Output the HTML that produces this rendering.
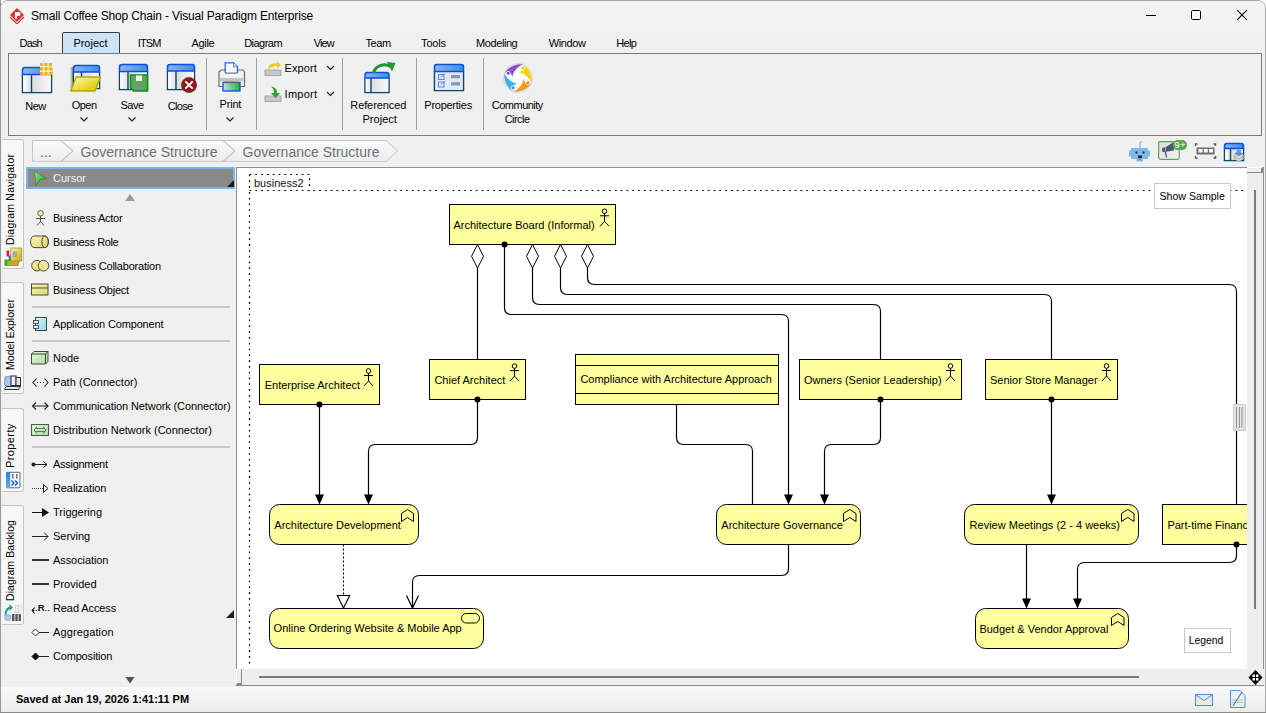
<!DOCTYPE html>
<html><head><meta charset="utf-8">
<style>
*{margin:0;padding:0;box-sizing:border-box}
html,body{width:1266px;height:713px;overflow:hidden;background:#fff}
body{font-family:"Liberation Sans",sans-serif;font-size:12px;color:#000;position:relative}
.a{position:absolute}
#win{position:absolute;left:0;top:0;width:1266px;height:713px;background:#f0f0f0;border:1px solid #a8a8a8;border-radius:8px 8px 0 0;overflow:hidden}
#title{position:absolute;left:0;top:0;width:1266px;height:30px;background:#f3f3f3}
.menu{position:absolute;top:37px;font-size:11px;color:#000}
#ribbon{position:absolute;left:8px;top:53px;width:1254px;height:83px;border:1px solid #7a7a7a;background:#f0f0f0}
.rl{position:absolute;font-size:11px;white-space:nowrap;color:#000}
.sep{position:absolute;top:58px;width:1px;height:72px;background:#a0a0a0}
.pal{position:absolute;left:53px;font-size:11px;letter-spacing:-0.1px;color:#000}
.palsep{position:absolute;left:32px;width:198px;height:2px;background:#c8c8c8}
.node{position:absolute;background:#ffff9f;border:1px solid #000;font-size:11px;color:#000;white-space:nowrap}
</style></head><body>
<div id="win">
 <div id="title"></div>
</div>
<!-- title -->
<svg class="a" style="left:9px;top:7px" width="16" height="17" viewBox="0 0 16 17">
 <path d="M8 1 L15 8 L8 15 L1 8 Z" fill="#d8353a"/>
 <path d="M1 10 L8 17 L15 10" fill="none" stroke="#d8353a" stroke-width="1.2"/>
 <path d="M6 5 h3.5 a2 2 0 0 1 0 4 h-1.5 v2.5 h-2 z" fill="#fff"/>
</svg>
<div class="a" id="ttl" style="left:31px;top:9px;font-size:12px;letter-spacing:-0.16px;color:#000">Small Coffee Shop Chain - Visual Paradigm Enterprise</div>
<!-- window controls -->
<div class="a" style="left:1146px;top:15px;width:10px;height:1px;background:#000"></div>
<div class="a" style="left:1190.5px;top:10px;width:10px;height:10px;border:1px solid #000;border-radius:1.5px"></div>
<svg class="a" style="left:1236px;top:9px" width="13" height="13"><path d="M1.2 1.2L10.8 10.8M10.8 1.2L1.2 10.8" stroke="#000" stroke-width="1.1"/></svg>

<!-- menu tabs -->
<div class="a" style="left:62px;top:32px;width:58px;height:22px;background:#cce4f7;border:1px solid #3c3c3c;border-bottom:none;border-radius:2px 2px 0 0"></div>
<div class="menu" style="left:19.6px;letter-spacing:-0.867px">Dash</div>
<div class="menu" style="left:73.4px;letter-spacing:-0.017px">Project</div>
<div class="menu" style="left:137.7px;letter-spacing:-0.833px">ITSM</div>
<div class="menu" style="left:191.6px;letter-spacing:-0.35px">Agile</div>
<div class="menu" style="left:244.2px;letter-spacing:-0.533px">Diagram</div>
<div class="menu" style="left:313.8px;letter-spacing:-0.9px">View</div>
<div class="menu" style="left:365.5px;letter-spacing:-0.433px">Team</div>
<div class="menu" style="left:421.1px;letter-spacing:-0.2px">Tools</div>
<div class="menu" style="left:476.1px;letter-spacing:-0.429px">Modeling</div>
<div class="menu" style="left:548.7px;letter-spacing:-0.36px">Window</div>
<div class="menu" style="left:616.3px;letter-spacing:-0.667px">Help</div>

<div id="ribbon"></div>

<!-- ribbon icons -->
<svg class="a" style="left:0;top:0" width="1266" height="140">
 <defs>
  <linearGradient id="hdr" x1="0" y1="0" x2="1" y2="0"><stop offset="0" stop-color="#8db5e8"/><stop offset="1" stop-color="#3d8ee6"/></linearGradient>
  <linearGradient id="pane" x1="0" y1="0" x2="1" y2="0"><stop offset="0" stop-color="#fafafa"/><stop offset="1" stop-color="#d8d8d8"/></linearGradient>
  <linearGradient id="fold" x1="0" y1="0" x2="1" y2="1"><stop offset="0" stop-color="#f4ee9a"/><stop offset="1" stop-color="#c9b81c"/></linearGradient>
  <linearGradient id="grn" x1="0" y1="0" x2="1" y2="0"><stop offset="0" stop-color="#7ac77a"/><stop offset="1" stop-color="#2ea03a"/></linearGradient>
 </defs>
 <!-- New -->
 <linearGradient id="lp" x1="0" y1="0" x2="1" y2="0"><stop offset="0" stop-color="#ffffff"/><stop offset="1" stop-color="#dedede"/></linearGradient>
 <linearGradient id="rp" x1="0" y1="0" x2="1" y2="0"><stop offset="0" stop-color="#dcdcdc"/><stop offset="1" stop-color="#fafafa"/></linearGradient>

 <path d="M22.5 74.5 V92.5 H51.5 V74.5" fill="none" stroke="#0d4866" stroke-width="1.5"/>
 <rect x="23.2" y="74.5" width="8.3" height="17.3" fill="url(#lp)"/>
 <rect x="31.5" y="74.5" width="19.3" height="17.3" fill="url(#rp)"/>
 <line x1="31.5" y1="74.5" x2="31.5" y2="92.5" stroke="#0d4866" stroke-width="1.4"/>
 <path d="M22.5 74.5 V70.0 Q22.5 67.5 25.0 67.5 H49.0 Q51.5 67.5 51.5 70.0 V74.5 Z" fill="url(#hdr)" stroke="#0a50e0" stroke-width="1.5"/>

 <rect x="40" y="63" width="12" height="12" fill="#eab020"/>
 <path d="M43.6 63v12M48.2 63v12M40 66.5h12M40 71.2h12" stroke="#fff8c8" stroke-width="1.2"/>
 <!-- Open -->
 <linearGradient id="shd" x1="0" y1="0" x2="1" y2="0"><stop offset="0" stop-color="#f0f0f0"/><stop offset="1" stop-color="#909090"/></linearGradient>
 <rect x="69.5" y="67" width="3.5" height="24" fill="url(#shd)"/>

 <path d="M73.5 72.0 V88.5 H99.5 V72.0" fill="none" stroke="#0d4866" stroke-width="1.5"/>
 <rect x="74.2" y="72.0" width="7.3" height="15.8" fill="url(#lp)"/>
 <rect x="81.5" y="72.0" width="17.3" height="15.8" fill="url(#rp)"/>
 <line x1="81.5" y1="72.0" x2="81.5" y2="88.5" stroke="#0d4866" stroke-width="1.4"/>
 <path d="M73.5 72.0 V68.0 Q73.5 65.5 76.0 65.5 H97.0 Q99.5 65.5 99.5 68.0 V72.0 Z" fill="url(#hdr)" stroke="#0a50e0" stroke-width="1.5"/>

 <linearGradient id="fold2" x1="0" y1="0" x2="1" y2="1"><stop offset="0" stop-color="#fffbd0"/><stop offset="0.6" stop-color="#e8d830"/><stop offset="1" stop-color="#d8c400"/></linearGradient>
 <path d="M76.2 77 L100.5 77 L95 91 L70.8 91 Z" fill="url(#fold2)" stroke="#b8a800" stroke-width="1.4" stroke-linejoin="round"/>
 <!-- Save -->

 <path d="M119.5 71.5 V89.5 H147.5 V71.5" fill="none" stroke="#0d4866" stroke-width="1.5"/>
 <rect x="120.2" y="71.5" width="7.8" height="17.3" fill="url(#lp)"/>
 <rect x="128" y="71.5" width="18.8" height="17.3" fill="url(#rp)"/>
 <line x1="128" y1="71.5" x2="128" y2="89.5" stroke="#0d4866" stroke-width="1.4"/>
 <path d="M119.5 71.5 V67.0 Q119.5 64.5 122.0 64.5 H145.0 Q147.5 64.5 147.5 67.0 V71.5 Z" fill="url(#hdr)" stroke="#0a50e0" stroke-width="1.5"/>

 <path d="M130.5 75 h17 v16 h-14 l-3 -3 z" fill="#58a858" stroke="#10900f" stroke-width="1.4"/>
 <rect x="136" y="75.5" width="6" height="5.5" fill="#fff"/>
 <rect x="134.5" y="86.3" width="7" height="2.6" fill="#7a8ab8"/>
 <!-- Close -->

 <path d="M167.5 71.0 V89.5 H194.5 V71.0" fill="none" stroke="#0d4866" stroke-width="1.5"/>
 <rect x="168.2" y="71.0" width="7.8" height="17.8" fill="url(#lp)"/>
 <rect x="176" y="71.0" width="17.8" height="17.8" fill="url(#rp)"/>
 <line x1="176" y1="71.0" x2="176" y2="89.5" stroke="#0d4866" stroke-width="1.4"/>
 <path d="M167.5 71.0 V67.0 Q167.5 64.5 170.0 64.5 H192.0 Q194.5 64.5 194.5 67.0 V71.0 Z" fill="url(#hdr)" stroke="#0a50e0" stroke-width="1.5"/>

 <circle cx="189" cy="85" r="7.6" fill="#8c1c1c" stroke="#6a1010" stroke-width="0.6"/>
 <path d="M185.3 81.3 L192.7 88.7 M192.7 81.3 L185.3 88.7" stroke="#fff" stroke-width="1.9"/>
 <!-- Print -->
 <linearGradient id="pg2" x1="0" y1="0" x2="1" y2="0"><stop offset="0" stop-color="#c8dcf4"/><stop offset="1" stop-color="#18b828"/></linearGradient>
 <path d="M219 72 L221 70 H243 L244.5 72 V86.5 H219 Z" fill="#f2f2f2" stroke="#6a6a6a" stroke-width="1.2"/>
 <path d="M225.2 73 V62.8 H233.5 L237.5 66.8 V73" fill="#f8f8f8" stroke="#1a6ae8" stroke-width="1.3"/>
 <path d="M233.5 62.8 V66.8 H237.5" fill="#e0e8f8" stroke="#1a6ae8" stroke-width="0.8"/>
 <rect x="225" y="72.5" width="12.5" height="1.2" fill="#777"/>
 <rect x="220" y="78" width="23" height="3.3" fill="#c4c4c4"/>
 <rect x="223" y="82.5" width="17" height="8.5" fill="url(#pg2)" stroke="#1050e0" stroke-width="1.3"/>
 <rect x="224.5" y="81.5" width="14.5" height="1.6" fill="#6a6a6a"/>
 <path d="M219 86.5 H222.3 M240.7 86.5 H244.5" stroke="#6a6a6a" stroke-width="1.2"/>
 <!-- Export -->
 <rect x="265" y="70" width="16" height="5.5" fill="#c8c8c8" stroke="#9a9a9a" stroke-width="0.8"/>
 <path d="M268 70 C268 64 272 63 277 63.5 L277 61 L281 65 L277 68.5 L277 66 C273 66 270 67 268 70 Z" fill="#e8c82a"/>
 <!-- Import -->
 <rect x="265" y="96" width="16" height="5.5" fill="#c8c8c8" stroke="#9a9a9a" stroke-width="0.8"/>
 <path d="M271 86.5 C275 87 277 89 277 93 L280 93 L275.5 98 L271 93 L274 93 C274 90 273 88 271 86.5 Z" fill="#2aa82a"/>
 <!-- Referenced project -->

 <path d="M365 78.0 V92.5 H389 V78.0" fill="none" stroke="#0d4866" stroke-width="1.5"/>
 <rect x="365.7" y="78.0" width="5.3" height="13.8" fill="url(#lp)"/>
 <rect x="371" y="78.0" width="17.3" height="13.8" fill="url(#rp)"/>
 <line x1="371" y1="78.0" x2="371" y2="92.5" stroke="#0d4866" stroke-width="1.4"/>
 <path d="M365 78.0 V75.0 Q365 72.5 367.5 72.5 H386.5 Q389 72.5 389 75.0 V78.0 Z" fill="url(#hdr)" stroke="#0a50e0" stroke-width="1.5"/>

 <path d="M373.5 73 C375 66 384 62.5 390.5 66.5" fill="none" stroke="#22962a" stroke-width="3"/>
 <path d="M387 62 L395.5 63 L392 71.5 Z" fill="#22962a"/>
 <!-- Properties -->
 <path d="M434.5 71.5 V90.5 H463.5 V71.5" fill="#e2e8f2" stroke="#0d4866" stroke-width="1.5"/>
 <rect x="435.5" y="72" width="27" height="18" fill="#e4eaf4"/>
 <path d="M434.5 71.5 V66.5 Q434.5 64.5 436.5 64.5 H461.5 Q463.5 64.5 463.5 66.5 V71.5 Z" fill="url(#hdr)" stroke="#0a50e0" stroke-width="1.5"/>
 <rect x="438.5" y="74.5" width="5.5" height="5" fill="#dde6f8" stroke="#5a88e0" stroke-width="1"/>
 <rect x="438.5" y="82" width="5.5" height="5" fill="#dde6f8" stroke="#5a88e0" stroke-width="1"/>
 <path d="M441 77 L445.5 73.5 M441 84.5 L445.5 81" stroke="#5a98e8" stroke-width="1"/>
 <rect x="451" y="75" width="9" height="3.3" fill="#8a98ae"/>
 <rect x="451" y="82.2" width="9" height="3.3" fill="#8a98ae"/>
 <!-- Community circle -->
 <defs>
  <radialGradient id="ccbg" cx="0.5" cy="0.5" r="0.5"><stop offset="0.5" stop-color="#ffffff"/><stop offset="1" stop-color="#dcdcdc"/></radialGradient>
 </defs>
 <g transform="translate(500,60)">
  <circle cx="18" cy="18" r="15" fill="url(#ccbg)"/>
  <path d="M22.5 4.2 C15 4 8.5 7 5.2 12.5 L8.5 11.5 C10.5 13 12 15 12.3 17 C13.5 11.5 17 7 22.5 4.2 Z" fill="#8a50d0"/>
  <circle cx="8.2" cy="13.2" r="1.9" fill="#7a40c8" stroke="#fff" stroke-width="0.8"/>
  <g transform="rotate(90 18 18)"><path d="M22.5 4.2 C15 4 8.5 7 5.2 12.5 L8.5 11.5 C10.5 13 12 15 12.3 17 C13.5 11.5 17 7 22.5 4.2 Z" fill="#f6d200"/><circle cx="8.2" cy="13.2" r="1.9" fill="#f0c800" stroke="#fff" stroke-width="0.8"/></g>
  <g transform="rotate(180 18 18)"><path d="M22.5 4.2 C15 4 8.5 7 5.2 12.5 L8.5 11.5 C10.5 13 12 15 12.3 17 C13.5 11.5 17 7 22.5 4.2 Z" fill="#ee9a22"/><circle cx="8.2" cy="13.2" r="1.9" fill="#e88010" stroke="#fff" stroke-width="0.8"/></g>
  <g transform="rotate(270 18 18)"><path d="M22.5 4.2 C15 4 8.5 7 5.2 12.5 L8.5 11.5 C10.5 13 12 15 12.3 17 C13.5 11.5 17 7 22.5 4.2 Z" fill="#40b0ea"/><circle cx="8.2" cy="13.2" r="1.9" fill="#2098e0" stroke="#fff" stroke-width="0.8"/></g>
 </g>
</svg>
<div class="rl" style="left:25.2px;top:100px;letter-spacing:-0.5px">New</div>
<div class="rl" style="left:71.7px;top:99px;letter-spacing:-0.5px">Open</div>
<div class="rl" style="left:120.5px;top:99px;letter-spacing:-0.467px">Save</div>
<div class="rl" style="left:167.8px;top:100px;letter-spacing:-0.675px">Close</div>
<div class="rl" style="left:219.5px;top:98px;letter-spacing:-0.175px">Print</div>
<div class="rl" style="left:284.6px;top:62px;letter-spacing:0.06px">Export</div>
<div class="rl" style="left:284.6px;top:88px;letter-spacing:0.26px">Import</div>
<div class="rl" style="left:350.3px;top:99px;letter-spacing:-0.1px">Referenced</div>
<div class="rl" style="left:362.4px;top:113px;letter-spacing:0.05px">Project</div>
<div class="rl" style="left:424.3px;top:99px;letter-spacing:-0.256px">Properties</div>
<div class="rl" style="left:491.8px;top:99px;letter-spacing:-0.512px">Community</div>
<div class="rl" style="left:504.7px;top:113px;letter-spacing:-0.56px">Circle</div>
<svg class="a" style="left:0;top:0" width="400" height="130">
 <path d="M80.5 117.5 l3.5 3.5 l3.5 -3.5 M128.5 117.5 l3.5 3.5 l3.5 -3.5 M226.5 117.5 l3.5 3.5 l3.5 -3.5 M327 66 l3.5 3.5 l3.5 -3.5 M327 92 l3.5 3.5 l3.5 -3.5" fill="none" stroke="#222" stroke-width="1.2"/>
</svg>
<div class="sep" style="left:206px"></div>
<div class="sep" style="left:256px"></div>
<div class="sep" style="left:342px"></div>
<div class="sep" style="left:416px"></div>
<div class="sep" style="left:483px"></div>


<!-- breadcrumb -->
<svg class="a" style="left:0;top:136px" width="420" height="32">
 <defs><linearGradient id="bc" x1="0" y1="0" x2="0" y2="1"><stop offset="0" stop-color="#fbfbfb"/><stop offset="1" stop-color="#ececec"/></linearGradient></defs>
 <path d="M32.5 4.5 H386 L397.5 15 L386 25.5 H32.5 Z" fill="url(#bc)" stroke="#c4c8cc" stroke-width="1"/>
 <path d="M61 4.5 L73 15 L61 25.5" fill="none" stroke="#c4c8cc" stroke-width="1.2"/>
 <path d="M223 4.5 L235 15 L223 25.5" fill="none" stroke="#c4c8cc" stroke-width="1.2"/>
</svg>
<div class="a" style="left:40px;top:144px;font-size:14px;color:#5a5f66">...</div>
<div class="a" style="left:80.5px;top:144px;font-size:14px;color:#6b7078">Governance Structure</div>
<div class="a" style="left:242.5px;top:144px;font-size:14px;color:#6b7078">Governance Structure</div>

<!-- right toolbar icons -->
<svg class="a" style="left:1120px;top:136px" width="146" height="32">
 <g fill="#82b8e8">
  <rect x="11" y="12" width="17" height="11" rx="1"/>
  <rect x="9" y="14.5" width="2.5" height="6"/>
  <rect x="27.5" y="14.5" width="2.5" height="6"/>
  <rect x="16.5" y="22" width="6.5" height="3.5"/>
  <path d="M20 12 V7 L21.5 5.5" fill="none" stroke="#82b8e8" stroke-width="1.3"/>
 </g>
 <rect x="15.5" y="15.5" width="2" height="2" fill="#1a2a3a"/>
 <rect x="22.5" y="15.5" width="2" height="2" fill="#1a2a3a"/>
 <rect x="18" y="19.5" width="4" height="2.5" fill="#1a2a3a"/>
 <rect x="19" y="22" width="2" height="2" fill="#5a9ad8"/>
 <linearGradient id="mg" x1="0" y1="0" x2="1" y2="1"><stop offset="0" stop-color="#dcdcdc"/><stop offset="1" stop-color="#f4f4f4"/></linearGradient>
 <rect x="38.6" y="5.6" width="20.6" height="17.8" rx="1.8" fill="url(#mg)" stroke="#5aa55a" stroke-width="1.2"/>
 <path d="M42.5 11.8 C41.8 12.5 41.8 15 42.8 16 L45.5 15.8 L45 11.5 Z" fill="#4a5872"/>
 <path d="M45.5 11.3 L50.5 8 L53.5 6 L54 13.5 L53.5 14.5 L46 15.8 Z" fill="#4a5872"/>
 <path d="M44.5 15.5 L46 21.5 L47.2 21.2 L46 15.5 Z" fill="#4a5872"/>
 <rect x="52.8" y="4.1" width="14.2" height="10" rx="5" fill="#56a850"/>
 <text x="54.6" y="12.3" font-family="Liberation Sans" font-size="9.5" fill="#fff">9+</text>
 <rect x="76.5" y="11.5" width="18" height="7" fill="#6e6e6e"/>
 <rect x="78.5" y="13" width="4" height="3.5" fill="#fff"/><rect x="83.8" y="13" width="4" height="3.5" fill="#fff"/><rect x="89" y="13" width="4" height="3.5" fill="#fff"/>
 <path d="M75.5 10 V8 H77.5 M93.5 8 H95.5 V10 M95.5 20 V22 H93.5 M77.5 22 H75.5 V20" fill="none" stroke="#555" stroke-width="1.4"/>

 <path d="M104.5 12.5 V24.5 H123.5 V12.5" fill="none" stroke="#0d4866" stroke-width="1.5"/>
 <rect x="105.2" y="12.5" width="5.3" height="11.3" fill="url(#lp)"/>
 <rect x="110.5" y="12.5" width="12.3" height="11.3" fill="url(#rp)"/>
 <line x1="110.5" y1="12.5" x2="110.5" y2="24.5" stroke="#0d4866" stroke-width="1.4"/>
 <path d="M104.5 12.5 V10.0 Q104.5 7.5 107.0 7.5 H121.0 Q123.5 7.5 123.5 10.0 V12.5 Z" fill="url(#hdr)" stroke="#0a50e0" stroke-width="1.5"/>
 <path d="M113.5 22.5 L118.8 19.8 L124 22.5 L118.8 25.5 Z" fill="#d8d8d8" stroke="#a0a0a0" stroke-width="0.7"/>
 <path d="M113.5 20 L118.8 17.3 L124 20 L118.8 23 Z" fill="#d8d8d8" stroke="#a0a0a0" stroke-width="0.7"/>
 <path d="M114.5 17.5 L118.8 15.2 L123 17.5 L118.8 20 Z" fill="#4a90e8" stroke="#a0a0a0" stroke-width="0.6"/>
 <path d="M115.5 15 L118.8 13.2 L122 15 L118.8 16.8 Z" fill="#5aa0f0"/>
</svg>

<!-- left vertical tabs -->
<div class="a" style="left:0;top:138px;width:25px;height:548px;background:#f0f0f0"></div>
<div class="a" style="left:2px;top:139px;width:22px;height:130px;background:#f7f7f7;border:1px solid #c5c5c5;border-left:none;border-radius:0 3px 3px 0"></div>
<div class="a" style="left:2px;top:282px;width:22px;height:112px;background:#f7f7f7;border:1px solid #c5c5c5;border-left:none;border-radius:0 3px 3px 0"></div>
<div class="a" style="left:2px;top:408px;width:22px;height:84px;background:#f7f7f7;border:1px solid #c5c5c5;border-left:none;border-radius:0 3px 3px 0"></div>
<div class="a" style="left:2px;top:505px;width:22px;height:120px;background:#f7f7f7;border:1px solid #c5c5c5;border-left:none;border-radius:0 3px 3px 0"></div>
<div class="a" style="left:0;top:0;width:1px;height:713px;background:#9a9a9a"></div>
<div class="vt a" style="left:4px;top:245px;transform-origin:0 0;transform:rotate(-90deg);font-size:10.5px;letter-spacing:0.22px;white-space:nowrap">Diagram Navigator</div>
<div class="vt a" style="left:4px;top:370px;transform-origin:0 0;transform:rotate(-90deg);font-size:10.5px;letter-spacing:0.02px;white-space:nowrap">Model Explorer</div>
<div class="vt a" style="left:4px;top:468px;transform-origin:0 0;transform:rotate(-90deg);font-size:11px;letter-spacing:0.4px;white-space:nowrap">Property</div>
<div class="vt a" style="left:4px;top:601px;transform-origin:0 0;transform:rotate(-90deg);font-size:10.5px;letter-spacing:0.07px;white-space:nowrap">Diagram Backlog</div>
<svg class="a" style="left:0;top:240px" width="26" height="390">
 <defs>
  <linearGradient id="bk" x1="0" y1="0" x2="1" y2="1"><stop offset="0" stop-color="#fff6a0"/><stop offset="1" stop-color="#c8a810"/></linearGradient>
  <linearGradient id="pb" x1="0" y1="0" x2="0" y2="1"><stop offset="0" stop-color="#1a8af0"/><stop offset="1" stop-color="#60b0f0"/></linearGradient>
 </defs>
 <!-- navigator icon (page y 248-265) -->
 <path d="M7.5 20 H19.5 L18 25.5 H5 Z" fill="#c8aa20" stroke="#7a6a30" stroke-width="0.6"/>
 <rect x="4.5" y="19.5" width="2.8" height="6" fill="#10c020"/>
 <rect x="6.6" y="10.5" width="2.6" height="6" fill="#e01050"/>
 <rect x="8.7" y="15.5" width="2.6" height="5.5" fill="#1070e0"/>
 <rect x="10.8" y="8" width="11" height="13" fill="url(#bk)" stroke="#9a8a30" stroke-width="0.7"/>
 <rect x="13.2" y="12" width="3" height="4.6" fill="#9ab0d8" stroke="#6a80b0" stroke-width="0.5"/>
 <!-- model explorer icon (page y 376-390) -->
 <path d="M4.5 145 L5 137 L11 136 V148 Z" fill="#a8c8f0" stroke="#5a6a80" stroke-width="0.6"/>
 <rect x="11" y="136" width="5" height="9.5" fill="#e8eef8" stroke="#2a3038" stroke-width="1"/>
 <rect x="16" y="137.5" width="4.5" height="8" fill="#dde6f2" stroke="#2a3038" stroke-width="1"/>
 <path d="M4.5 149.5 L6 146.5 H20.5 L18.5 149.5 Z" fill="#e8e8e8" stroke="#2a3038" stroke-width="1"/>
 <!-- property icon (page y 472-488) -->
 <rect x="6.5" y="232.3" width="13.5" height="15.5" rx="1" fill="#f4f8ff" stroke="#3a4a60" stroke-width="0.8"/>
 <rect x="6.2" y="232" width="4" height="16" rx="1" fill="url(#pb)"/>
 <rect x="12" y="234" width="1.6" height="4.5" fill="#6a7a90"/><rect x="16" y="234" width="1.6" height="4.5" fill="#6a7a90"/>
 <path d="M11.5 240.5 L14 243 L11.5 245.5 M15 240.5 L17.5 243 L15 245.5" fill="none" stroke="#1050d0" stroke-width="1.3"/>
 <!-- backlog icon (page y 605-621) -->
 <path d="M5.5 376 C5.5 370 8 367.5 11.5 367.5" fill="none" stroke="#20a088" stroke-width="1.8"/>
 <path d="M9.5 364 L13 367.5 L9.5 371 Z" fill="#20a088"/>
 <circle cx="7.8" cy="377.5" r="3.2" fill="#a8c8f0" stroke="#7aa0d8" stroke-width="0.6"/>
 <rect x="12" y="374" width="2.4" height="7" fill="#555"/><rect x="15.3" y="374" width="2.4" height="7" fill="#555"/><rect x="18.6" y="374" width="2.4" height="7" fill="#555"/>
 <rect x="15.2" y="365.2" width="2.5" height="7.5" fill="none" stroke="#ccc" stroke-width="0.6"/><rect x="18.4" y="365.2" width="2.5" height="7.5" fill="none" stroke="#ccc" stroke-width="0.6"/>
</svg>

<!-- palette -->
<div class="a" style="left:25px;top:167px;width:211px;height:519px;background:#f0f0f0"></div>
<div class="a" style="left:26px;top:167px;width:209px;height:22px;background:#8a8a8a;border:2px solid #78b4ee;border-radius:1px"></div>
<svg class="a" style="left:26px;top:167px" width="210" height="22">
 <defs><linearGradient id="cg" x1="0" y1="0" x2="1" y2="1"><stop offset="0" stop-color="#8ee88e"/><stop offset="1" stop-color="#1a9a2a"/></linearGradient></defs>
 <path d="M8.5 4 L20.5 11.5 L14 12.5 L10 19 Z" fill="url(#cg)" stroke="#2a7a2a" stroke-width="0.6"/>
 <path d="M208 13 L208 20 L201 20 Z" fill="#1a1a1a"/>
</svg>
<div class="a" style="left:53px;top:172px;font-size:11px;color:#f4f4f4">Cursor</div>
<svg class="a" style="left:124px;top:192px" width="12" height="10"><path d="M1 9 L6 2 L11 9 Z" fill="#9a9a9a"/></svg>
<svg class="a" style="left:124px;top:676px" width="12" height="10"><path d="M1.5 1 L6 7.5 L10.5 1 Z" fill="#555"/></svg>
<svg class="a" style="left:224px;top:608px" width="12" height="12"><path d="M10 2 L10 10 L2 10 Z" fill="#222"/></svg>
<div class="palsep" style="top:306px"></div>
<div class="palsep" style="top:340px"></div>
<div class="palsep" style="top:446px"></div>
<div class="pal" style="top:212px;letter-spacing:-0.238px">Business Actor</div>
<div class="pal" style="top:236px;letter-spacing:-0.384px">Business Role</div>
<div class="pal" style="top:260px;letter-spacing:-0.215px">Business Collaboration</div>
<div class="pal" style="top:284px;letter-spacing:-0.243px">Business Object</div>
<div class="pal" style="top:318px;letter-spacing:-0.160px">Application Component</div>
<div class="pal" style="top:352px;letter-spacing:-0.033px">Node</div>
<div class="pal" style="top:376px;letter-spacing:0.047px">Path (Connector)</div>
<div class="pal" style="top:400px;letter-spacing:-0.106px">Communication Network (Connector)</div>
<div class="pal" style="top:424px;letter-spacing:-0.023px">Distribution Network (Connector)</div>
<div class="pal" style="top:458px;letter-spacing:-0.278px">Assignment</div>
<div class="pal" style="top:482px;letter-spacing:-0.100px">Realization</div>
<div class="pal" style="top:506px;letter-spacing:-0.012px">Triggering</div>
<div class="pal" style="top:530px;letter-spacing:-0.033px">Serving</div>
<div class="pal" style="top:554px;letter-spacing:-0.080px">Association</div>
<div class="pal" style="top:578px;letter-spacing:0.015px">Provided</div>
<div class="pal" style="top:602px;letter-spacing:-0.1px">Read Access</div>
<div class="pal" style="top:626px;letter-spacing:0.120px">Aggregation</div>
<div class="pal" style="top:650px;letter-spacing:-0.180px">Composition</div>

<svg class="a" style="left:25px;top:200px" width="30" height="470">
 <defs>
  <linearGradient id="yg" x1="0" y1="0" x2="1" y2="1"><stop offset="0" stop-color="#fbf5b0"/><stop offset="1" stop-color="#e0d870"/></linearGradient>
  <linearGradient id="gg" x1="0" y1="0" x2="1" y2="1"><stop offset="0" stop-color="#e8f8e0"/><stop offset="1" stop-color="#a8d8a0"/></linearGradient>
  <linearGradient id="cyg" x1="0" y1="0" x2="1" y2="1"><stop offset="0" stop-color="#dff6fa"/><stop offset="1" stop-color="#90d8e8"/></linearGradient>
 </defs>
 <!-- actor -->
 <circle cx="15.5" cy="13.2" r="2.8" fill="#f4ec90" stroke="#555" stroke-width="0.9"/>
 <path d="M15.5 16 V22 M11 18.5 H20 M12 25.5 L15.5 21.5 L19 25.5" fill="none" stroke="#444" stroke-width="0.9"/>
 <!-- role -->
 <path d="M9 36 H20 A3.5 5.8 0 0 1 20 47.6 H9 A3.5 5.8 0 0 1 9 36 Z" fill="url(#yg)" stroke="#4a4a40" stroke-width="1"/>
 <ellipse cx="20" cy="41.8" rx="3.2" ry="5.8" fill="none" stroke="#4a4a40" stroke-width="1"/>
 <!-- collaboration -->
 <circle cx="12" cy="65.7" r="5.3" fill="url(#yg)" stroke="#4a4a40" stroke-width="1"/>
 <circle cx="18.5" cy="65.7" r="5.3" fill="url(#yg)" fill-opacity="0.85" stroke="#4a4a40" stroke-width="1"/>
 <!-- object -->
 <rect x="6.5" y="84" width="16.5" height="11" fill="url(#yg)" stroke="#4a4a40" stroke-width="1"/>
 <line x1="6.5" y1="88" x2="23" y2="88" stroke="#4a4a40" stroke-width="1"/>
 <!-- app component -->
 <rect x="10.5" y="117.5" width="11" height="13" fill="url(#cyg)" stroke="#3a4a50" stroke-width="1"/>
 <rect x="8.5" y="120.5" width="5" height="3" fill="#e0f4f8" stroke="#3a4a50" stroke-width="0.9"/>
 <rect x="8.5" y="125.5" width="5" height="3" fill="#e0f4f8" stroke="#3a4a50" stroke-width="0.9"/>
 <!-- node -->
 <path d="M6.5 154 L9 151.5 H23 V161.5 L20.5 164 H6.5 Z" fill="url(#gg)" stroke="#3a4a3a" stroke-width="1"/>
 <path d="M6.5 154 H20.5 V164 M20.5 154 L23 151.5" fill="none" stroke="#3a4a3a" stroke-width="1"/>
 <!-- path -->
 <path d="M11.5 178.5 L8 182.5 L11.5 186.5 M19.5 178.5 L23 182.5 L19.5 186.5" fill="none" stroke="#222" stroke-width="1.1"/>
 <path d="M12 182.5 h1.2 M15 182.5 h1.2 M18 182.5 h1.2" stroke="#222" stroke-width="1"/>
 <!-- comm -->
 <path d="M11 202.5 L7.5 206 L11 209.5 M19.5 202.5 L23 206 L19.5 209.5 M7.5 206 H23" fill="none" stroke="#222" stroke-width="1.1"/>
 <!-- dist -->
 <rect x="6.5" y="224.5" width="17" height="11" fill="url(#gg)" stroke="#4a5a4a" stroke-width="1"/>
 <path d="M12 226.5 L9 230 L12 233.5 M18 226.5 L21 230 L18 233.5 M10 228.5 H20 M10 231.5 H20" fill="none" stroke="#4a6a4a" stroke-width="0.9"/>
 <!-- assignment -->
 <circle cx="8.5" cy="264.5" r="2" fill="#222"/>
 <path d="M8.5 264.5 H22 M18.5 261.5 L22 264.5 L18.5 267.5" fill="none" stroke="#222" stroke-width="1"/>
 <!-- realization -->
 <path d="M7 288.5 H18" stroke="#444" stroke-width="1" stroke-dasharray="1 1"/>
 <path d="M18.5 284.5 L23 288.5 L18.5 292.5 Z" fill="none" stroke="#222" stroke-width="1"/>
 <!-- triggering -->
 <path d="M7 312.5 H17" stroke="#111" stroke-width="1"/>
 <path d="M17 308 L24 312.5 L17 317 Z" fill="#111"/>
 <!-- serving -->
 <path d="M7 336.5 H23 M19 332.5 L23 336.5 L19 340.5" fill="none" stroke="#222" stroke-width="1"/>
 <!-- association -->
 <path d="M7 360 H24" stroke="#333" stroke-width="2"/>
 <!-- provided -->
 <path d="M7 384 H24" stroke="#333" stroke-width="2"/>
 <!-- read access -->
 <path d="M9.5 407.5 L7.3 410.5 L9.5 413.5" fill="none" stroke="#111" stroke-width="1.2"/>
 <text x="12.7" y="410.8" font-family="Liberation Sans" font-size="9.5" font-weight="bold" fill="#111">R</text>
 <path d="M8 410.5 h1.2 M10.6 410.5 h1.2 M13.4 410.5 h1.2 M20.4 410.5 h1.2 M23.2 410.5 h1.2" stroke="#111" stroke-width="1.2"/>
 <!-- aggregation -->
 <path d="M7 432.5 L10.5 429 L14 432.5 L10.5 436 Z" fill="#fff" stroke="#333" stroke-width="1"/>
 <path d="M14 432.5 H24" stroke="#222" stroke-width="1"/>
 <!-- composition -->
 <path d="M7 456.5 L10.5 453 L14 456.5 L10.5 460 Z" fill="#111" stroke="#111" stroke-width="1"/>
 <path d="M14 456.5 H24" stroke="#222" stroke-width="1"/>
</svg>

<!-- canvas -->
<div class="a" style="left:236px;top:167px;width:1011px;height:502px;background:#fff;border-top:1px solid #8a9099;border-left:1px solid #8a9099"></div>

<!-- diagram -->
<svg class="a" style="left:237px;top:168px" width="1010" height="501" viewBox="237 168 1010 501">
<style>
.nd{fill:#ffff9f;stroke:#000;stroke-width:1}
.tx{font-family:"Liberation Sans",sans-serif;font-size:11px;fill:#000}
.ic{fill:none;stroke:#000;stroke-width:1}
.cn{fill:none;stroke:#000;stroke-width:1.2}
</style>
<path d="M249.5 174.5 H309.5 V190.5 M249.5 174.5 V665 M249.5 190.5 H1247" fill="none" stroke="#000" stroke-width="1.2" stroke-dasharray="1.8 4"/>
<text x="254" y="187" style="font-family:'Liberation Sans';font-size:11px;fill:#111">business2</text>
<path class="cn" d="M477.5 268 L477.5 359.5"/>
<path class="cn" d="M504.5 244.5 L504.5 307.5 Q504.5 314.5 511.5 314.5 L781.5 314.5 Q788.5 314.5 788.5 321.5 L788.5 500"/>
<path class="cn" d="M532.5 268 L532.5 297.5 Q532.5 304.5 539.5 304.5 L873.5 304.5 Q880.5 304.5 880.5 311.5 L880.5 359.5"/>
<path class="cn" d="M560.5 268 L560.5 287.5 Q560.5 294.5 567.5 294.5 L1044.5 294.5 Q1051.5 294.5 1051.5 301.5 L1051.5 359.5"/>
<path class="cn" d="M587.5 268 L587.5 277.5 Q587.5 284.5 594.5 284.5 L1229.5 284.5 Q1236.5 284.5 1236.5 291.5 L1236.5 504.5"/>
<path class="cn" d="M319.5 404.5 L319.5 500"/>
<path class="cn" d="M477.5 399.5 L477.5 437.5 Q477.5 444.5 470.5 444.5 L375.5 444.5 Q368.5 444.5 368.5 451.5 L368.5 500"/>
<path class="cn" d="M676.5 404.5 L676.5 437.5 Q676.5 444.5 683.5 444.5 L745.5 444.5 Q752.5 444.5 752.5 451.5 L752.5 504.5"/>
<path class="cn" d="M880.5 399.5 L880.5 437.5 Q880.5 444.5 873.5 444.5 L831.5 444.5 Q824.5 444.5 824.5 451.5 L824.5 500"/>
<path class="cn" d="M1051.5 399.5 L1051.5 500"/>
<path d="M343.5 544.5 V596" fill="none" stroke="#000" stroke-width="1.1" stroke-dasharray="2 2"/>
<path d="M337.3 595.5 H349.7 L343.5 608 Z" fill="#fff" stroke="#000" stroke-width="1.1"/>
<path class="cn" d="M788.5 544.5 L788.5 568.5 Q788.5 575.5 781.5 575.5 L419.5 575.5 Q412.5 575.5 412.5 582.5 L412.5 608"/>
<path class="cn" d="M406.5 595.5 L412.5 608 L418.5 595.5"/>
<path class="cn" d="M1026.5 544.5 L1026.5 604"/>
<path class="cn" d="M1236.5 544.5 L1236.5 555.5 Q1236.5 562.5 1229.5 562.5 L1084.5 562.5 Q1077.5 562.5 1077.5 569.5 L1077.5 604"/>
<path d="M788.5 504.5 L784.0 494.5 L793.0 494.5 Z" fill="#000"/>
<path d="M319.5 504.5 L315.0 494.5 L324.0 494.5 Z" fill="#000"/>
<path d="M368.5 504.5 L364.0 494.5 L373.0 494.5 Z" fill="#000"/>
<path d="M824.5 504.5 L820.0 494.5 L829.0 494.5 Z" fill="#000"/>
<path d="M1051.5 504.5 L1047.0 494.5 L1056.0 494.5 Z" fill="#000"/>
<path d="M1026.5 608.5 L1022.0 598.5 L1031.0 598.5 Z" fill="#000"/>
<path d="M1077.5 608.5 L1073.0 598.5 L1082.0 598.5 Z" fill="#000"/>
<rect x="449.5" y="204.5" width="166.0" height="40.0" rx="0" class="nd"/>
<text x="453.4" y="229" class="tx">Architecture Board (Informal)</text>
<g class="ic"><circle cx="604.5" cy="211.3" r="2.3"/><path d="M604.5 213.60000000000002 V221.3 M600.0 215.8 H609.0 M600.0 226.3 L604.5 221.3 L609.0 226.3"/></g>
<rect x="259.5" y="364.5" width="120.0" height="40.0" rx="0" class="nd"/>
<text x="264.7" y="388.6" class="tx">Enterprise Architect</text>
<g class="ic"><circle cx="368.5" cy="371" r="2.3"/><path d="M368.5 373.3 V381 M364.0 375.5 H373.0 M364.0 386 L368.5 381 L373.0 386"/></g>
<rect x="429.5" y="359.5" width="96.0" height="40.0" rx="0" class="nd"/>
<text x="434.4" y="383.7" class="tx">Chief Architect</text>
<g class="ic"><circle cx="514.5" cy="366.1" r="2.3"/><path d="M514.5 368.40000000000003 V376.1 M510.0 370.6 H519.0 M510.0 381.1 L514.5 376.1 L519.0 381.1"/></g>
<rect x="575.5" y="354.5" width="203.0" height="50.0" rx="0" class="nd"/>
<path d="M575.5 365.5 H778.5 M575.5 393.5 H778.5" stroke="#000" stroke-width="1"/>
<text x="580.4" y="382.9" class="tx">Compliance with Architecture Approach</text>
<rect x="799.5" y="359.5" width="162.0" height="40.0" rx="0" class="nd"/>
<text x="804" y="384" class="tx">Owners (Senior Leadership)</text>
<g class="ic"><circle cx="950.5" cy="366" r="2.3"/><path d="M950.5 368.3 V376 M946.0 370.5 H955.0 M946.0 381 L950.5 376 L955.0 381"/></g>
<rect x="985.5" y="359.5" width="132.0" height="40.0" rx="0" class="nd"/>
<text x="990" y="384" class="tx">Senior Store Manager</text>
<g class="ic"><circle cx="1106.5" cy="366" r="2.3"/><path d="M1106.5 368.3 V376 M1102.0 370.5 H1111.0 M1102.0 381 L1106.5 376 L1111.0 381"/></g>
<rect x="1162.5" y="504.5" width="127.5" height="40.0" rx="0" class="nd"/>
<text x="1167.4" y="528.7" class="tx">Part-time Finance</text>
<rect x="269.5" y="504.5" width="149.0" height="40.0" rx="10" class="nd"/>
<text x="274.3" y="528.8" class="tx">Architecture Development</text>
<path class="ic" d="M401.5 513.5 L407.5 509.5 L413.5 513.5 L413.5 521.5 L407.5 517.5 L401.5 521.5 Z"/>
<rect x="716.5" y="504.5" width="144.0" height="40.0" rx="10" class="nd"/>
<text x="721.3" y="528.7" class="tx">Architecture Governance</text>
<path class="ic" d="M843.5 513.5 L849.75 509.5 L856 513.5 L856 521.5 L849.75 517.5 L843.5 521.5 Z"/>
<rect x="964.5" y="504.5" width="174.0" height="40.0" rx="10" class="nd"/>
<text x="969.6" y="528.7" class="tx">Review Meetings (2 - 4 weeks)</text>
<path class="ic" d="M1121.5 513.5 L1127.75 509.5 L1134 513.5 L1134 521.5 L1127.75 517.5 L1121.5 521.5 Z"/>
<rect x="269.5" y="608.5" width="214.0" height="40.0" rx="10" class="nd"/>
<text x="273.6" y="632.3" class="tx">Online Ordering Website &amp; Mobile App</text>
<rect x="461.5" y="613.5" width="18" height="9.5" rx="4.75" class="ic"/>
<rect x="975.5" y="608.5" width="153.0" height="40.0" rx="10" class="nd"/>
<text x="979.4" y="632.7" class="tx">Budget &amp; Vendor Approval</text>
<path class="ic" d="M1111.5 617.5 L1117.75 613.5 L1124 617.5 L1124 625.5 L1117.75 621.5 L1111.5 625.5 Z"/>
<circle cx="504.5" cy="244.5" r="3" fill="#000"/>
<circle cx="319.5" cy="404.5" r="3" fill="#000"/>
<circle cx="477.5" cy="399.5" r="3" fill="#000"/>
<circle cx="880.5" cy="399.5" r="3" fill="#000"/>
<circle cx="1051.5" cy="399.5" r="3" fill="#000"/>
<circle cx="1236.5" cy="544.5" r="3" fill="#000"/>
<path d="M477.5 244.5 L483.5 256.25 L477.5 268.0 L471.5 256.25 Z" fill="#fff" stroke="#000" stroke-width="1"/>
<path d="M532.5 244.5 L538.5 256.25 L532.5 268.0 L526.5 256.25 Z" fill="#fff" stroke="#000" stroke-width="1"/>
<path d="M560.5 244.5 L566.5 256.25 L560.5 268.0 L554.5 256.25 Z" fill="#fff" stroke="#000" stroke-width="1"/>
<path d="M587.5 244.5 L593.5 256.25 L587.5 268.0 L581.5 256.25 Z" fill="#fff" stroke="#000" stroke-width="1"/>
<rect x="1233.5" y="404.5" width="12" height="26" fill="#e4e4e4" stroke="#cfcfcf" stroke-width="1"/>
<path d="M1236.5 407 V428 M1239.5 407 V428 M1242 407 V428" stroke="#8a8a8a" stroke-width="0.9"/>
<rect x="1154.5" y="183.5" width="76" height="25" fill="#fff" stroke="#c8c8c8" stroke-width="1"/>
<text x="1159.5" y="200.2" style="font-family:'Liberation Sans';font-size:10.6px;fill:#000">Show Sample</text>
<rect x="1184.5" y="628.5" width="46" height="24" fill="#fff" stroke="#c8c8c8" stroke-width="1"/>
<text x="1188.7" y="643.8" style="font-family:'Liberation Sans';font-size:10.4px;fill:#000">Legend</text>
</svg>
<!-- vertical scrollbar area -->
<div class="a" style="left:1247px;top:167px;width:17px;height:519px;background:#eeeeee"></div>
<div class="a" style="left:1263px;top:167px;width:1px;height:519px;background:#8a9099"></div>
<div class="a" style="left:1247px;top:167px;width:16px;height:6px;border-top:1px solid #fff;border-right:2px solid #8a8a8a;border-bottom:1px solid #8a8a8a"></div>
<div class="a" style="left:1254px;top:190px;width:2px;height:419px;background:#7a7a7a"></div>
<!-- horizontal scrollbar -->
<div class="a" style="left:236px;top:669px;width:1028px;height:17px;background:#eeeeee;border-bottom:1px solid #8a9099"></div>
<div class="a" style="left:236px;top:669px;width:6px;height:16px;border-left:1px solid #fff;border-bottom:2px solid #8a8a8a;border-right:1px solid #8a8a8a"></div>
<div class="a" style="left:259px;top:676px;width:880px;height:2px;background:#7a7a7a"></div>
<svg class="a" style="left:1247px;top:669px" width="17" height="17">
 <path d="M8.5 1 L15.5 8.5 L8.5 16 L1.5 8.5 Z" fill="#000"/>
 <rect x="5.5" y="5.5" width="2.5" height="2.5" fill="#fff"/><rect x="9" y="5.5" width="2.5" height="2.5" fill="#fff"/>
 <rect x="5.5" y="9" width="2.5" height="2.5" fill="#fff"/><rect x="9" y="9" width="2.5" height="2.5" fill="#fff"/>
</svg>
<!-- status bar -->
<div class="a" style="left:1px;top:687px;width:1264px;height:25px;background:linear-gradient(#fafafa,#ececec)"></div>
<div class="a" style="left:16px;top:693px;font-size:11px;font-weight:bold;color:#000">Saved at Jan 19, 2026 1:41:11 PM</div>
<svg class="a" style="left:1190px;top:688px" width="60" height="22">
 <rect x="5.5" y="6.5" width="17" height="11" fill="#e8e8e8" stroke="#4a90e0" stroke-width="1"/>
 <path d="M5.5 6.5 L14 12.5 L22.5 6.5" fill="none" stroke="#4a90e0" stroke-width="1"/>
 <path d="M40.5 2.5 H50 L55 7.5 V19.5 H40.5 Z" fill="#f0f0f0" stroke="#4a90e0" stroke-width="1"/>
 <path d="M42 12 H53 M42 14.5 H53" stroke="#bbb" stroke-width="1"/>
 <path d="M43 18 L52 4" stroke="#2a90b0" stroke-width="1.2"/>
</svg>
<div class="a" style="left:0;top:712px;width:1266px;height:1px;background:#8a8a8a"></div>
</body></html>
